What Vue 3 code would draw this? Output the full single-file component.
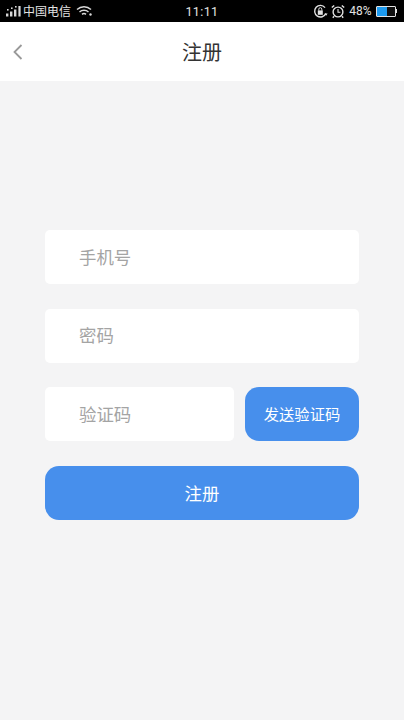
<script setup>
const fields = ['手机号', '密码']
</script>

<template>
  <div class="screen">
    <div class="status">
      <div class="status-left">
        <svg class="signal" width="17" height="13" viewBox="0 0 17 13">
          <g fill="#d8d8d8">
            <rect x="0" y="8.5" width="2.4" height="3" />
            <rect x="4" y="6.5" width="2.4" height="5" />
            <rect x="8" y="4.5" width="2.4" height="7" />
            <rect x="1" y="4" width="1.6" height="1.6" />
            <rect x="5" y="2.4" width="1.6" height="1.6" />
            <rect x="9" y="1" width="1.6" height="1.6" />
            <rect x="12.4" y="1" width="2.2" height="10.5" />
          </g>
        </svg>
        <span class="carrier">中国电信</span>
        <svg class="wifi" width="17" height="12" viewBox="0 0 17 12">
          <g fill="none" stroke="#d8d8d8" stroke-width="1.5">
            <path d="M1 4.5C5 .8 11 .8 15 4.5" />
            <path d="M3.5 7C6 4.8 10 4.8 12.5 7" />
            <path d="M6 9.3C7.2 8.3 8.8 8.3 10 9.3" />
          </g>
          <circle cx="14.5" cy="9.5" r="1.2" fill="#d8d8d8" />
        </svg>
      </div>
      <span class="time">11:11</span>
      <div class="status-right">
        <svg width="15" height="15" viewBox="0 0 15 15">
          <path d="M12.8 9.5A5.8 5.8 0 1 1 12 3.6" fill="none" stroke="#e2e2e2" stroke-width="1.4" />
          <path d="M11.6 9.5h3l-1.5 2.2z" fill="#e2e2e2" />
          <rect x="4.8" y="6.4" width="5" height="4.4" fill="#e2e2e2" />
          <path d="M5.8 6.5V5.2a1.5 1.5 0 0 1 3 0v1.3" fill="none" stroke="#e2e2e2" />
        </svg>
        <svg width="14" height="15" viewBox="0 0 14 15">
          <circle cx="7" cy="8" r="4.9" fill="none" stroke="#e2e2e2" stroke-width="1.4" />
          <path d="M7 5v3.3h2.4" fill="none" stroke="#e2e2e2" stroke-width="1.1" />
          <path d="M.8 3.6 3.2 1.4M13.2 3.6 10.8 1.4M3 12.3l-1.2 1.5M11 12.3l1.2 1.5" stroke="#e2e2e2" stroke-width="1.4" />
        </svg>
        <span class="battery-text">48%</span>
        <div class="battery">
          <div class="battery-level"></div>
        </div>
        <div class="battery-tip"></div>
      </div>
    </div>

    <header class="nav">
      <svg class="back" width="10" height="16" viewBox="0 0 10 16">
        <path d="M8.5 1 1.5 8l7 7" fill="none" stroke="#999" stroke-width="1.8" />
      </svg>
      <h1 class="title">注册</h1>
    </header>

    <main class="form">
      <div v-for="field in fields" :key="field" class="field">{{ field }}</div>
      <div class="code-row">
        <div class="field code-field">验证码</div>
        <button class="send" type="button">发送验证码</button>
      </div>
      <button class="submit" type="button">注册</button>
    </main>
  </div>
</template>

<style scoped>
.screen {
  width: 404px;
  height: 720px;
  background: #f4f4f5;
  display: flex;
  flex-direction: column;
  font-family: "Noto Sans CJK SC", "Liberation Sans", sans-serif;
  overflow: hidden;
}
.status {
  height: 22px;
  background: #000;
  color: #e2e2e2;
  display: grid;
  grid-template-columns: 1fr auto 1fr;
  align-items: center;
  flex: none;
}
.status-left {
  display: flex;
  align-items: center;
  padding-left: 6px;
}
.carrier {
  font-size: 12px;
  line-height: 22px;
}
.wifi { margin-left: 5px; }
.time {
  font-family: "Roboto", "Liberation Sans", sans-serif;
  font-size: 12.5px;
  letter-spacing: 0.4px;
}
.status-right {
  display: flex;
  align-items: center;
  justify-content: flex-end;
  padding-right: 7px;
}
.status-right svg + svg { margin-left: 3px; }
.battery-text {
  font-family: "Roboto", "Liberation Sans", sans-serif;
  font-size: 12px;
  margin-left: 4px;
  margin-right: 4px;
}
.battery {
  width: 20px;
  height: 11px;
  border: 1px solid #e2e2e2;
  background: #111;
  box-sizing: border-box;
  border-radius: 1px;
}
.battery-level {
  width: 10px;
  height: 100%;
  background: #1d9bf0;
}
.battery-tip {
  width: 1.5px;
  height: 4px;
  background: #e2e2e2;
}
.nav {
  height: 59px;
  background: #fff;
  flex: none;
  display: flex;
  align-items: center;
  justify-content: center;
  position: relative;
}
.back {
  position: absolute;
  left: 13px;
  top: 22px;
}
.title {
  margin: 0;
  font-size: 20px;
  font-weight: 400;
  color: #333;
  line-height: 1;
}
.form {
  padding: 149px 45px 0;
  display: flex;
  flex-direction: column;
  gap: 24.67px;
}
.field {
  height: 54px;
  box-sizing: border-box;
  padding-left: 34px;
  padding-bottom: 2px;
  background: #fff;
  border-radius: 5px;
  color: #a4a4a4;
  font-size: 17.4px;
  display: flex;
  align-items: center;
}
.code-row {
  display: flex;
  gap: 11px;
}
.code-field { width: 189px; flex: none; }
.send, .submit {
  border: 0;
  background: #478fec;
  color: #fff;
  font-family: inherit;
  cursor: pointer;
}
.send {
  flex: 1;
  height: 54px;
  padding: 0 0 2px;
  border-radius: 14px;
  font-size: 15.3px;
}
.submit {
  height: 54px;
  padding: 0;
  border-radius: 14px;
  font-size: 17.4px;
}
</style>
